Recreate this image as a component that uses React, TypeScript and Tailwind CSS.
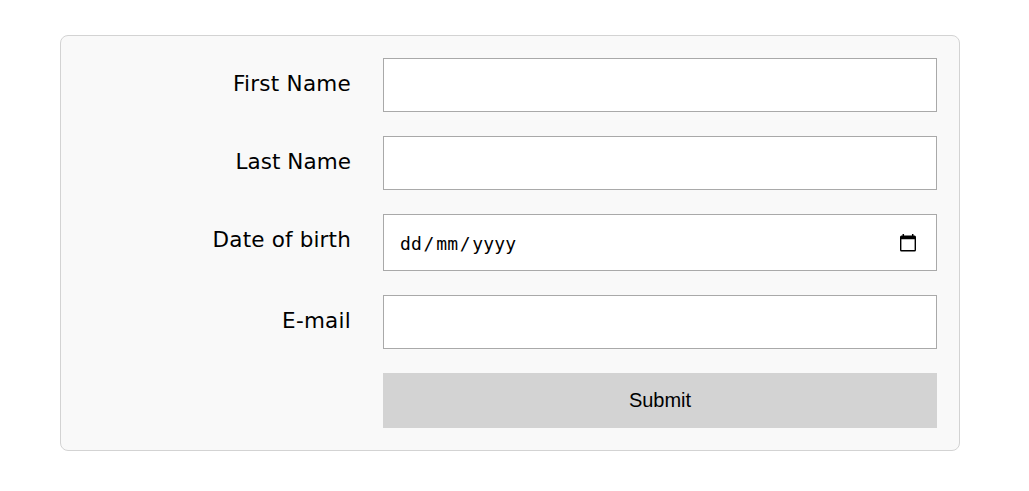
import type { ReactNode } from 'react';

function Row({ label, children, spacing = 'tracking-[0.16px]' }: { label: string; children: ReactNode; spacing?: string }) {
  return (
    <label className="flex items-start gap-8">
      <span
        className={`w-[268px] shrink-0 whitespace-nowrap pt-[11px] text-right font-['DejaVu_Sans',sans-serif] text-[21.5px] leading-[30px] ${spacing}`}
      >
        {label}
      </span>
      {children}
    </label>
  );
}

const field = 'block w-[554px] rounded-none border border-[#a9a9a9] bg-white px-4 outline-none';

function CalendarIcon() {
  return (
    <svg width="16" height="18" viewBox="0 0 16 18" fill="none">
      <path d="M3.3 0v3M12.7 0v3" stroke="black" strokeWidth="1.5" />
      <path d="M1.5 1.5h13a1.5 1.5 0 0 1 1.5 1.5V16a1.5 1.5 0 0 1-1.5 1.5h-13A1.5 1.5 0 0 1 0 16V3a1.5 1.5 0 0 1 1.5-1.5ZM1.4 5.2v10.7h13.2V5.2Z" fill="black" fillRule="evenodd" />
    </svg>
  );
}

export default function App() {
  return (
    <main className="pl-[60px] pt-[35px] text-black">
      <form
        className="flex h-[416px] w-[900px] flex-col gap-6 rounded-lg border border-[#d3d3d3] bg-[#f9f9f9] px-[22px] pt-[22px]"
        onSubmit={(event) => event.preventDefault()}
      >
        <Row label="First Name" spacing="tracking-[0.25px]">
          <input type="text" className={`${field} h-[54px]`} />
        </Row>
        <Row label="Last Name" spacing="tracking-[0.05px]">
          <input type="text" className={`${field} h-[54px]`} />
        </Row>
        <Row label="Date of birth">
          <span className={`${field} h-[57px]`}>
            <span className="flex h-full items-center justify-between pr-1">
              <span className="flex gap-[1.5px] pt-[2px] font-['DejaVu_Sans_Mono',monospace] text-[18px] tracking-[0.2px]">
                <span>dd</span>
                <span>/</span>
                <span>mm</span>
                <span>/</span>
                <span>yyyy</span>
              </span>
              <CalendarIcon />
            </span>
          </span>
        </Row>
        <Row label="E-mail" spacing="tracking-[0.25px]">
          <input type="email" className={`${field} h-[54px]`} />
        </Row>
        <button
          type="submit"
          className="ml-[300px] h-[55px] w-[554px] bg-[#d3d3d3] pb-[2px] font-['Liberation_Sans',Arial,sans-serif] text-[20px]"
        >
          Submit
        </button>
      </form>
    </main>
  );
}
